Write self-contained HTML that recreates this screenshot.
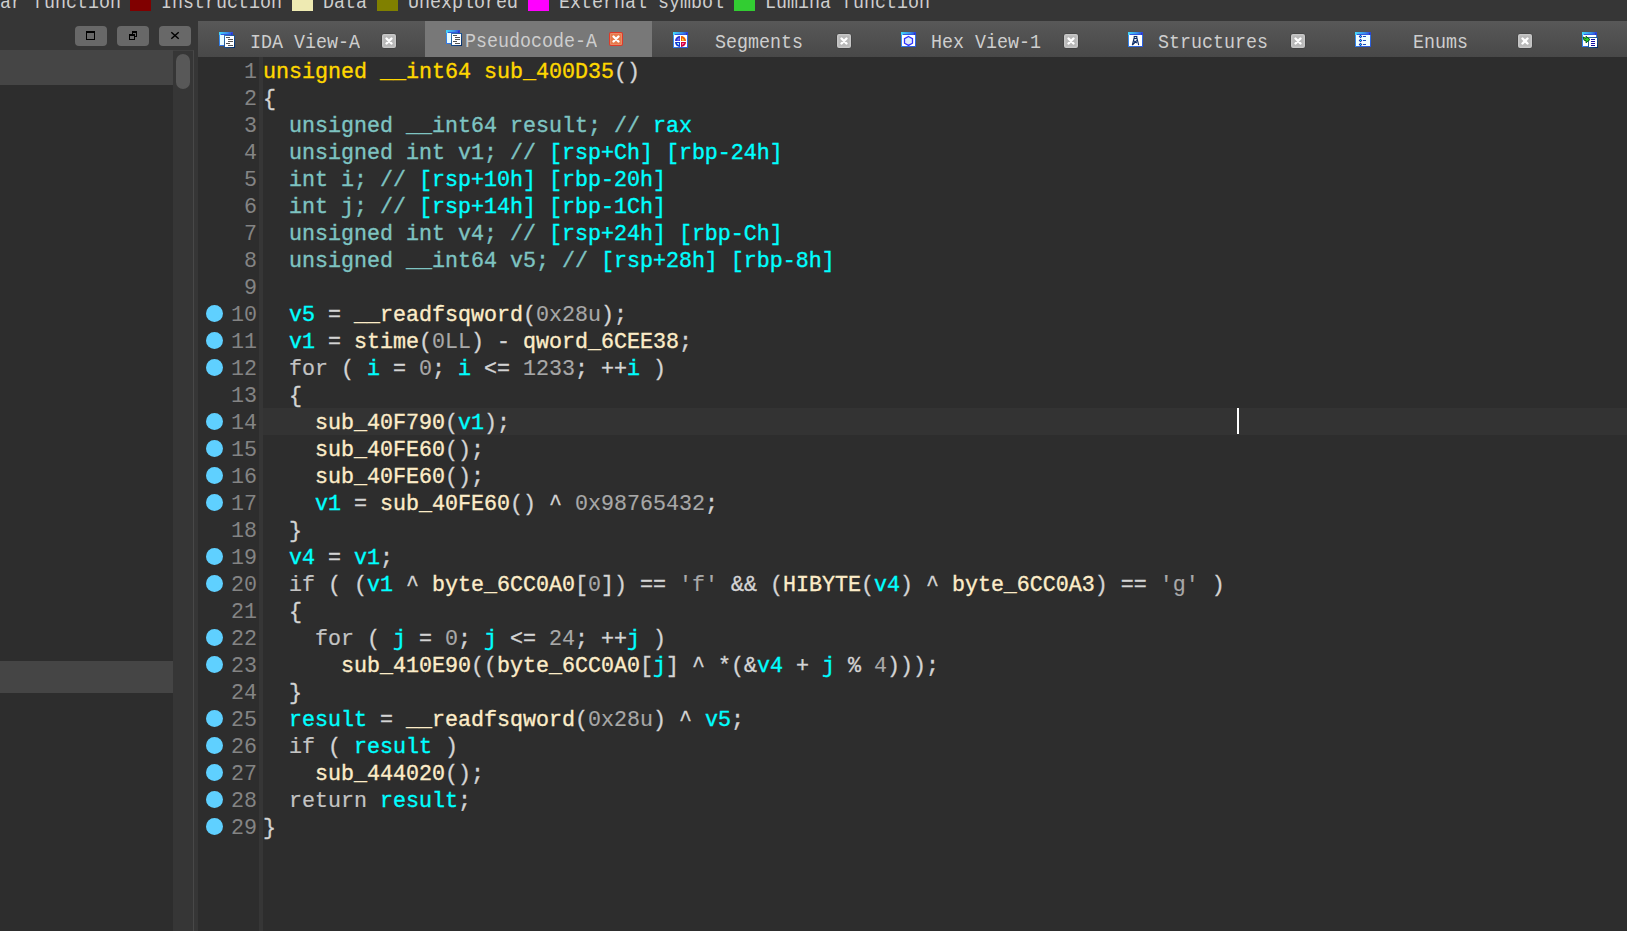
<!DOCTYPE html><html><head><meta charset="utf-8"><title>IDA</title><style>
html,body{margin:0;padding:0}
body{width:1627px;height:931px;overflow:hidden;background:#2d2d2d;position:relative;font-family:"Liberation Mono",monospace}
i{display:block;position:absolute}
#top{position:absolute;left:0;top:0;width:1627px;height:21px;background:#363636;overflow:hidden}
#lp{position:absolute;left:0;top:21px;width:198px;height:910px;background:#363636}
#lpin{position:absolute;left:0;top:30px;width:173px;height:880px;background:#2d2d2d}
.hl{position:absolute;left:0;width:173px;background:#454545}
#sbt{position:absolute;left:173px;top:29px;width:20px;height:881px;background:#363636;border-right:1px solid #484848;border-top:1px solid #404040}
#thumb{position:absolute;left:176px;top:33px;width:14px;height:35px;border-radius:7px;background:#585858}
.wb{position:absolute;top:5px;width:32px;height:20px;border-radius:4px;background:#686868}
.wb svg{display:block}
#tb{position:absolute;left:198px;top:21px;width:1429px;height:36px;background:linear-gradient(#585858,#484848)}
.act{position:absolute;left:425px;top:21px;width:227px;height:36px;background:#787878}
.ic{position:absolute;display:block;overflow:visible}
.ui{position:absolute;font-size:18.33px;line-height:40px;height:40px;color:#cecece;white-space:pre;transform:scaleY(1.13);transform-origin:0 24.88px}
.sw{top:0;width:21px;height:11px}
#gut{position:absolute;left:198px;top:57px;width:61px;height:874px;background:#2d2d2d}
#sep{position:absolute;left:259px;top:57px;width:4px;height:874px;background:#363636}
#cur{position:absolute;left:263px;top:408px;width:1364px;height:27px;background:#333333}
#caret{position:absolute;left:1237px;top:408px;width:2px;height:26px;background:#fff}
pre{margin:0;position:absolute;font-family:"Liberation Mono",monospace;font-size:21.663px;line-height:27px;white-space:pre;-webkit-text-stroke:0.35px currentColor}
#nums{left:198px;top:58.7px;width:59px;text-align:right;color:#848484;-webkit-text-stroke:0}
#code{left:263px;top:58.7px;color:#d4d4d4}
.dot{left:206px;width:17px;height:17px;border-radius:50%;background:#5fd0ff}
.y{color:#ffd700}.n{color:#a8a8a8;-webkit-text-stroke-width:0.15px}.k{color:#c4c4c4;-webkit-text-stroke-width:0.2px}.v{color:#00ffff}.t{color:#7ec4c2}.f{color:#fcecc8}.p{color:#d4d4d4}
</style></head><body><svg width="0" height="0" style="position:absolute"><defs><linearGradient id="gb" x1="0" y1="0" x2="1" y2="1"><stop offset="0" stop-color="#3aa0f8"/><stop offset="1" stop-color="#2a55d8"/></linearGradient><linearGradient id="gt" x1="0" y1="0" x2="1" y2="0"><stop offset="0" stop-color="#45d8fb"/><stop offset="0.6" stop-color="#3a8fe8"/><stop offset="1" stop-color="#2a3fd0"/></linearGradient><linearGradient id="gd" x1="0" y1="0" x2="1" y2="1"><stop offset="0" stop-color="#3a7ab8"/><stop offset="1" stop-color="#002a66"/></linearGradient></defs></svg><div id="top"><span class="ui " style="left:0px;top:-15.88px">ar function</span><i class="sw" style="left:130px;background:#800000"></i><span class="ui " style="left:161px;top:-15.88px">Instruction</span><i class="sw" style="left:292px;background:#eeeab2"></i><span class="ui " style="left:323px;top:-15.88px">Data</span><i class="sw" style="left:377px;background:#808000"></i><span class="ui " style="left:408px;top:-15.88px">Unexplored</span><i class="sw" style="left:528px;background:#ff00ff"></i><span class="ui " style="left:559px;top:-15.88px">External symbol</span><i class="sw" style="left:734px;background:#32cd32"></i><span class="ui " style="left:765px;top:-15.88px">Lumina function</span></div><div id="lp"><div id="lpin"></div><div class="hl" style="top:29px;height:35px"></div><div class="hl" style="top:640px;height:32px"></div><div id="sbt"></div><div id="thumb"></div><div class="wb" style="left:75px"><svg width="32" height="20"><rect x="11.5" y="5.5" width="8" height="8" fill="none" stroke="#000"/><rect x="11" y="5" width="9" height="2" fill="#000"/></svg></div><div class="wb" style="left:117px"><svg width="32" height="20"><rect x="15.5" y="5.5" width="4" height="5" fill="none" stroke="#000"/><rect x="15" y="5" width="5" height="2" fill="#000"/><rect x="12.5" y="8.5" width="5" height="5" fill="#686868" stroke="#000"/><rect x="12" y="8" width="6" height="2" fill="#000"/></svg></div><div class="wb" style="left:159px"><svg width="32" height="20"><path d="M12.3 6.3 L19.7 12.7 M19.7 6.3 L12.3 12.7" stroke="#000" stroke-width="1.5"/></svg></div></div><div id="tb"></div><svg class="ic" style="left:219px;top:32px" width="16" height="16" viewBox="0 0 16 16"><rect x="0" y="0" width="14" height="14" fill="url(#gb)"/><rect x="0" y="0" width="14" height="3" fill="url(#gt)"/><rect x="2" y="2" width="11" height="1" fill="#3058e0"/><rect x="12" y="1" width="1" height="2" fill="#3030d0"/><rect x="1" y="3" width="12" height="10" fill="#e8fbff"/><rect x="5" y="3" width="11" height="13" fill="url(#gd)"/><rect x="6" y="4" width="9" height="11" fill="#fff"/><g fill="#555"><rect x="7" y="5" width="4" height="1"/><rect x="9" y="7" width="5" height="1"/><rect x="9" y="9" width="5" height="1"/><rect x="7" y="11" width="4" height="1"/><rect x="9" y="13" width="5" height="1"/></g></svg><span class="ui " style="left:250px;top:24.12px">IDA View-A</span><svg class="ic" style="left:381px;top:33px" width="16" height="16" viewBox="-1 -1 16 16"><rect x="-0.5" y="-0.5" width="15" height="15" rx="3" fill="none" stroke="#404040" stroke-opacity="0.7"/><rect x="0" y="0" width="14" height="14" rx="2" fill="#c6c6c6"/><rect x="1.5" y="1.5" width="11" height="11" rx="0.5" fill="#b8b8b8"/><path d="M4.5 4.5 L9.5 9.5 M9.5 4.5 L4.5 9.5" stroke="#fff" stroke-width="2.4" stroke-linecap="round"/></svg><div class="act"></div><svg class="ic" style="left:446px;top:30px" width="16" height="16" viewBox="0 0 16 16"><rect x="0" y="0" width="14" height="14" fill="url(#gb)"/><rect x="0" y="0" width="14" height="3" fill="url(#gt)"/><rect x="2" y="2" width="11" height="1" fill="#3058e0"/><rect x="12" y="1" width="1" height="2" fill="#3030d0"/><rect x="1" y="3" width="12" height="10" fill="#e8fbff"/><rect x="5" y="3" width="11" height="13" fill="url(#gd)"/><rect x="6" y="4" width="9" height="11" fill="#fff"/><g fill="#555"><rect x="7" y="5" width="4" height="1"/><rect x="9" y="7" width="5" height="1"/><rect x="9" y="9" width="5" height="1"/><rect x="7" y="11" width="4" height="1"/><rect x="9" y="13" width="5" height="1"/></g></svg><span class="ui " style="left:465px;top:23.12px">Pseudocode-A</span><svg class="ic" style="left:609px;top:32px" width="14" height="14" viewBox="0 0 14 14"><rect x="0" y="0" width="14" height="14" rx="2" fill="#df3a28"/><rect x="1" y="1" width="12" height="12" rx="1" fill="#ea8a66"/><rect x="2" y="2" width="10" height="10" fill="#e57a4a"/><path d="M4.5 4.5 L9.5 9.5 M9.5 4.5 L4.5 9.5" stroke="#fff" stroke-width="2.4" stroke-linecap="round"/></svg><svg class="ic" style="left:673px;top:32px" width="15" height="16" viewBox="0 0 15 16"><rect x="0" y="0" width="15" height="16" fill="url(#gb)"/><rect x="0" y="0" width="15" height="3" fill="url(#gt)"/><rect x="2" y="2" width="12" height="1" fill="#3058e0"/><rect x="13" y="1" width="1" height="2" fill="#3030d0"/><rect x="1" y="3" width="13" height="12" fill="#fff"/><path d="M7 4 A5 5 0 0 0 2 9 L7 9Z" fill="#2a30c8"/><path d="M6.5 5.5 A3.5 3.5 0 0 0 4 8.5 L6.5 8.5Z" fill="#7868ff"/><path d="M8 4 A5 5 0 0 1 13 9 L8 9Z" fill="#f06000"/><path d="M9 6 L9 8.5 L11.5 8.5Z" fill="#ffe050"/><path d="M7 10 L2 10 A5 5 0 0 0 7 15Z" fill="#1838d0"/><path d="M6 11 L3.8 11 A3.5 3.5 0 0 0 6 13.2Z" fill="#a0ffff"/><path d="M8 10 L13 10 A5 5 0 0 1 8 15Z" fill="#d00040"/><path d="M9 11 L11.5 11 L9 13.2Z" fill="#ff70b0"/></svg><span class="ui " style="left:715px;top:24.12px">Segments</span><svg class="ic" style="left:836px;top:33px" width="16" height="16" viewBox="-1 -1 16 16"><rect x="-0.5" y="-0.5" width="15" height="15" rx="3" fill="none" stroke="#404040" stroke-opacity="0.7"/><rect x="0" y="0" width="14" height="14" rx="2" fill="#c6c6c6"/><rect x="1.5" y="1.5" width="11" height="11" rx="0.5" fill="#b8b8b8"/><path d="M4.5 4.5 L9.5 9.5 M9.5 4.5 L4.5 9.5" stroke="#fff" stroke-width="2.4" stroke-linecap="round"/></svg><svg class="ic" style="left:901px;top:32px" width="15" height="15" viewBox="0 0 15 15"><rect x="0" y="0" width="15" height="15" fill="url(#gb)"/><rect x="0" y="0" width="15" height="3" fill="url(#gt)"/><rect x="2" y="2" width="12" height="1" fill="#3058e0"/><rect x="13" y="1" width="1" height="2" fill="#3030d0"/><rect x="1" y="3" width="13" height="11" fill="#fff"/><path d="M7.5 4.5 L11.5 6.7 L11.5 11.2 L7.5 13.4 L3.5 11.2 L3.5 6.7Z" fill="#dde8f8" stroke="#3030ff" stroke-width="1.3"/></svg><span class="ui " style="left:931px;top:24.12px">Hex View-1</span><svg class="ic" style="left:1063px;top:33px" width="16" height="16" viewBox="-1 -1 16 16"><rect x="-0.5" y="-0.5" width="15" height="15" rx="3" fill="none" stroke="#404040" stroke-opacity="0.7"/><rect x="0" y="0" width="14" height="14" rx="2" fill="#c6c6c6"/><rect x="1.5" y="1.5" width="11" height="11" rx="0.5" fill="#b8b8b8"/><path d="M4.5 4.5 L9.5 9.5 M9.5 4.5 L4.5 9.5" stroke="#fff" stroke-width="2.4" stroke-linecap="round"/></svg><svg class="ic" style="left:1128px;top:32px" width="15" height="15" viewBox="0 0 15 15"><rect x="0" y="0" width="15" height="15" fill="url(#gb)"/><rect x="0" y="0" width="15" height="3" fill="url(#gt)"/><rect x="2" y="2" width="12" height="1" fill="#3058e0"/><rect x="13" y="1" width="1" height="2" fill="#3030d0"/><rect x="1" y="3" width="13" height="11" fill="#fff"/><g fill="none" stroke="#0a2a66" stroke-width="1.1"><rect x="6.2" y="4.5" width="2.6" height="2"/><path d="M6 6.5 L4.3 13.2 M9 6.5 L10.7 13.2 M4.3 13 L8.8 8.5 M5.6 8.6 L8.8 11"/></g></svg><span class="ui " style="left:1158px;top:24.12px">Structures</span><svg class="ic" style="left:1290px;top:33px" width="16" height="16" viewBox="-1 -1 16 16"><rect x="-0.5" y="-0.5" width="15" height="15" rx="3" fill="none" stroke="#404040" stroke-opacity="0.7"/><rect x="0" y="0" width="14" height="14" rx="2" fill="#c6c6c6"/><rect x="1.5" y="1.5" width="11" height="11" rx="0.5" fill="#b8b8b8"/><path d="M4.5 4.5 L9.5 9.5 M9.5 4.5 L4.5 9.5" stroke="#fff" stroke-width="2.4" stroke-linecap="round"/></svg><svg class="ic" style="left:1355px;top:32px" width="16" height="15" viewBox="0 0 16 15"><rect x="0" y="0" width="16" height="15" fill="url(#gb)"/><rect x="0" y="0" width="16" height="3" fill="url(#gt)"/><rect x="2" y="2" width="13" height="1" fill="#3058e0"/><rect x="14" y="1" width="1" height="2" fill="#3030d0"/><rect x="1" y="3" width="14" height="11" fill="#fff"/><rect x="1" y="3" width="14" height="11" fill="#f0ffff"/><path d="M5.5 2.7 L7.3 4.5 L5.5 6.3 L3.7 4.5Z" fill="#1a2ab0"/><rect x="5" y="4" width="1" height="1" fill="#00f0ff"/><rect x="8" y="4" width="3" height="1" fill="#1a4ac0"/><path d="M5.5 6.7 L7.3 8.5 L5.5 10.3 L3.7 8.5Z" fill="#1a2ab0"/><rect x="5" y="8" width="1" height="1" fill="#00f0ff"/><rect x="8" y="8" width="3" height="1" fill="#1a4ac0"/><path d="M5.5 10.7 L7.3 12.5 L5.5 14.3 L3.7 12.5Z" fill="#1a2ab0"/><rect x="5" y="12" width="1" height="1" fill="#00f0ff"/><rect x="8" y="12" width="3" height="1" fill="#1a4ac0"/></svg><span class="ui " style="left:1413px;top:24.12px">Enums</span><svg class="ic" style="left:1517px;top:33px" width="16" height="16" viewBox="-1 -1 16 16"><rect x="-0.5" y="-0.5" width="15" height="15" rx="3" fill="none" stroke="#404040" stroke-opacity="0.7"/><rect x="0" y="0" width="14" height="14" rx="2" fill="#c6c6c6"/><rect x="1.5" y="1.5" width="11" height="11" rx="0.5" fill="#b8b8b8"/><path d="M4.5 4.5 L9.5 9.5 M9.5 4.5 L4.5 9.5" stroke="#fff" stroke-width="2.4" stroke-linecap="round"/></svg><svg class="ic" style="left:1582px;top:32px" width="16" height="16" viewBox="0 0 16 16"><rect x="0" y="0" width="15" height="15" fill="url(#gb)"/><rect x="0" y="0" width="15" height="3" fill="url(#gt)"/><rect x="2" y="2" width="12" height="1" fill="#3058e0"/><rect x="13" y="1" width="1" height="2" fill="#3030d0"/><rect x="1" y="3" width="13" height="11" fill="#fff"/><rect x="6" y="5" width="10" height="11" fill="url(#gd)"/><rect x="7" y="6" width="8" height="9" fill="#fff"/><g fill="#1010a0"><rect x="9" y="7" width="4" height="1"/><rect x="9" y="9" width="4" height="1"/><rect x="9" y="11" width="4" height="1"/><rect x="9" y="13" width="4" height="1"/></g><path d="M1.2 5 L4 6.5 L4 4.3 L8 7.5 L4 10.8 L4 8.6 L2 8.2Z" fill="#30d030" stroke="#005010" stroke-width="0.9"/></svg><div id="gut"></div><div id="sep"></div><div id="cur"></div><div id="caret"></div><i class="dot" style="top:305px"></i><i class="dot" style="top:332px"></i><i class="dot" style="top:359px"></i><i class="dot" style="top:413px"></i><i class="dot" style="top:440px"></i><i class="dot" style="top:467px"></i><i class="dot" style="top:494px"></i><i class="dot" style="top:548px"></i><i class="dot" style="top:575px"></i><i class="dot" style="top:629px"></i><i class="dot" style="top:656px"></i><i class="dot" style="top:710px"></i><i class="dot" style="top:737px"></i><i class="dot" style="top:764px"></i><i class="dot" style="top:791px"></i><i class="dot" style="top:818px"></i><pre id="nums">1
2
3
4
5
6
7
8
9
10
11
12
13
14
15
16
17
18
19
20
21
22
23
24
25
26
27
28
29</pre><pre id="code"><span class="y">unsigned __int64 sub_400D35</span><span class="p">()</span>
<span class="p">{</span>
  <span class="t">unsigned __int64 result; // </span><span class="v">rax</span>
  <span class="t">unsigned int v1; // </span><span class="v">[rsp+Ch] [rbp-24h]</span>
  <span class="t">int i; // </span><span class="v">[rsp+10h] [rbp-20h]</span>
  <span class="t">int j; // </span><span class="v">[rsp+14h] [rbp-1Ch]</span>
  <span class="t">unsigned int v4; // </span><span class="v">[rsp+24h] [rbp-Ch]</span>
  <span class="t">unsigned __int64 v5; // </span><span class="v">[rsp+28h] [rbp-8h]</span>

  <span class="v">v5</span><span class="p"> = </span><span class="f">__readfsqword</span><span class="p">(</span><span class="n">0x28u</span><span class="p">);</span>
  <span class="v">v1</span><span class="p"> = </span><span class="f">stime</span><span class="p">(</span><span class="n">0LL</span><span class="p">) - </span><span class="f">qword_6CEE38</span><span class="p">;</span>
  <span class="k">for</span><span class="p"> ( </span><span class="v">i</span><span class="p"> = </span><span class="n">0</span><span class="p">; </span><span class="v">i</span><span class="p"> &lt;= </span><span class="n">1233</span><span class="p">; ++</span><span class="v">i</span><span class="p"> )</span>
  <span class="p">{</span>
    <span class="f">sub_40F790</span><span class="p">(</span><span class="v">v1</span><span class="p">);</span>
    <span class="f">sub_40FE60</span><span class="p">();</span>
    <span class="f">sub_40FE60</span><span class="p">();</span>
    <span class="v">v1</span><span class="p"> = </span><span class="f">sub_40FE60</span><span class="p">() ^ </span><span class="n">0x98765432</span><span class="p">;</span>
  <span class="p">}</span>
  <span class="v">v4</span><span class="p"> = </span><span class="v">v1</span><span class="p">;</span>
  <span class="k">if</span><span class="p"> ( (</span><span class="v">v1</span><span class="p"> ^ </span><span class="f">byte_6CC0A0</span><span class="p">[</span><span class="n">0</span><span class="p">]) == </span><span class="n">'f'</span><span class="p"> &amp;&amp; (</span><span class="f">HIBYTE</span><span class="p">(</span><span class="v">v4</span><span class="p">) ^ </span><span class="f">byte_6CC0A3</span><span class="p">) == </span><span class="n">'g'</span><span class="p"> )</span>
  <span class="p">{</span>
    <span class="k">for</span><span class="p"> ( </span><span class="v">j</span><span class="p"> = </span><span class="n">0</span><span class="p">; </span><span class="v">j</span><span class="p"> &lt;= </span><span class="n">24</span><span class="p">; ++</span><span class="v">j</span><span class="p"> )</span>
      <span class="f">sub_410E90</span><span class="p">((</span><span class="f">byte_6CC0A0</span><span class="p">[</span><span class="v">j</span><span class="p">] ^ *(&amp;</span><span class="v">v4</span><span class="p"> + </span><span class="v">j</span><span class="p"> % </span><span class="n">4</span><span class="p">)));</span>
  <span class="p">}</span>
  <span class="v">result</span><span class="p"> = </span><span class="f">__readfsqword</span><span class="p">(</span><span class="n">0x28u</span><span class="p">) ^ </span><span class="v">v5</span><span class="p">;</span>
  <span class="k">if</span><span class="p"> ( </span><span class="v">result</span><span class="p"> )</span>
    <span class="f">sub_444020</span><span class="p">();</span>
  <span class="k">return</span> <span class="v">result</span><span class="p">;</span>
<span class="p">}</span></pre></body></html>
